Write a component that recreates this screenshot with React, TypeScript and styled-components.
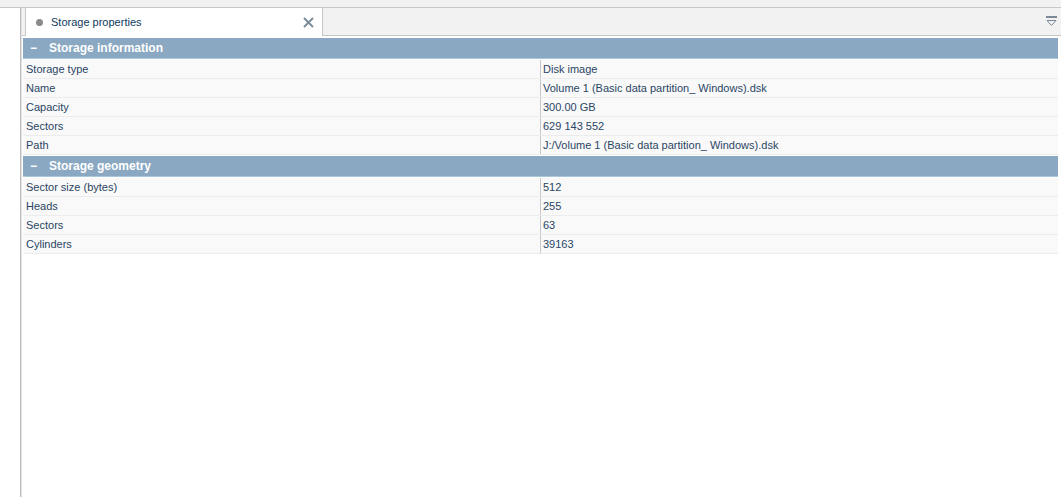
import React from 'react';
import styled, { createGlobalStyle } from 'styled-components';

const GlobalStyle = createGlobalStyle`
  html, body {
    margin: 0;
    padding: 0;
    background: #ffffff;
    font-family: 'Liberation Sans', Arial, sans-serif;
    font-size: 11px;
  }
`;

const Page = styled.div`
  height: 497px;
  display: flex;
  flex-direction: column;
  overflow: hidden;
`;

const TopStrip = styled.div`
  height: 7px;
  background: #f2f2f2;
  border-bottom: 1px solid #c6c6c6;
`;

const Body = styled.div`
  flex: 1;
  display: flex;
`;

const Gutter = styled.div`
  width: 20px;
  background: #ffffff;
  border-right: 1px solid #bdbdbd;
  box-shadow: 1px 0 0 #e2e2e2;
`;

const Main = styled.div`
  flex: 1;
  margin-left: 1px;
  display: flex;
  flex-direction: column;
`;

const TabBar = styled.div`
  height: 27px;
  background: #f2f2f2;
  border-bottom: 1px solid #c6c6c6;
  display: flex;
  align-items: stretch;
  padding-left: 3px;
  padding-right: 4px;
`;

const Tab = styled.div`
  width: 298px;
  background: #ffffff;
  border-left: 1px solid #c6c6c6;
  border-right: 1px solid #c6c6c6;
  display: flex;
  align-items: center;
  padding: 0 8px 0 10px;
  box-sizing: border-box;
  margin-bottom: -1px;
  color: #0e3a5c;
  font-size: 11px;
`;

const Dot = styled.span`
  width: 7px;
  height: 7px;
  border-radius: 50%;
  background: #8a8a8a;
  margin-right: 8px;
`;

const TabTitle = styled.span`
  flex: 1;
`;

const TabClose = styled.svg`
  width: 11px;
  height: 11px;
`;

const Spacer = styled.div`
  flex: 1;
`;

const MenuIcon = styled.svg`
  align-self: center;
  width: 11px;
  height: 11px;
`;

const Table = styled.div`
  margin: 2px 3px 0 1px;
  display: flex;
  flex-direction: column;
`;

const Section = styled.div`
  display: flex;
  flex-direction: column;
  padding-bottom: 1px;
`;

const SectionHeader = styled.div`
  height: 20px;
  background: #8aa8c1;
  border-bottom: 1px solid #a9c7da;
  margin-bottom: 1px;
  display: flex;
  align-items: center;
  color: #ffffff;
  font-weight: bold;
  font-size: 12px;
`;

const Toggle = styled.span`
  width: 26px;
  padding-left: 7px;
  box-sizing: border-box;
`;

const Row = styled.div`
  height: 18px;
  display: grid;
  grid-template-columns: 517px 1fr;
  background: #f9f9f9;
  border-bottom: 1px solid #ececec;
  color: #2a4564;
`;

const Cell = styled.div<{ $divider?: boolean }>`
  display: flex;
  align-items: center;
  padding-left: ${(p) => (p.$divider ? '2px' : '3px')};
  border-left: ${(p) => (p.$divider ? '1px solid #c8c8c8' : 'none')};
  white-space: nowrap;
`;

const sections = [
  {
    title: 'Storage information',
    rows: [
      ['Storage type', 'Disk image'],
      ['Name', 'Volume 1 (Basic data partition_ Windows).dsk'],
      ['Capacity', '300.00 GB'],
      ['Sectors', '629 143 552'],
      ['Path', 'J:/Volume 1 (Basic data partition_ Windows).dsk'],
    ],
  },
  {
    title: 'Storage geometry',
    rows: [
      ['Sector size (bytes)', '512'],
      ['Heads', '255'],
      ['Sectors', '63'],
      ['Cylinders', '39163'],
    ],
  },
];

export default function App() {
  return (
    <Page>
      <GlobalStyle />
      <TopStrip />
      <Body>
        <Gutter />
        <Main>
          <TabBar>
            <Tab>
              <Dot />
              <TabTitle>Storage properties</TabTitle>
              <TabClose viewBox="0 0 11 11">
                <path d="M1 1 L10 10 M10 1 L1 10" stroke="#7b8d9b" strokeWidth="2" />
              </TabClose>
            </Tab>
            <Spacer />
            <MenuIcon viewBox="0 0 11 11">
              <rect x="0" y="0" width="11" height="2" fill="#7b8896" />
              <path d="M1 4.5 L10 4.5 L5.5 9.5 Z" fill="none" stroke="#7b8896" strokeWidth="1" />
            </MenuIcon>
          </TabBar>
          <Table>
            {sections.map((section) => (
              <Section key={section.title}>
                <SectionHeader>
                  <Toggle>−</Toggle>
                  {section.title}
                </SectionHeader>
                {section.rows.map(([label, value]) => (
                  <Row key={label + value}>
                    <Cell>{label}</Cell>
                    <Cell $divider>{value}</Cell>
                  </Row>
                ))}
              </Section>
            ))}
          </Table>
        </Main>
      </Body>
    </Page>
  );
}
